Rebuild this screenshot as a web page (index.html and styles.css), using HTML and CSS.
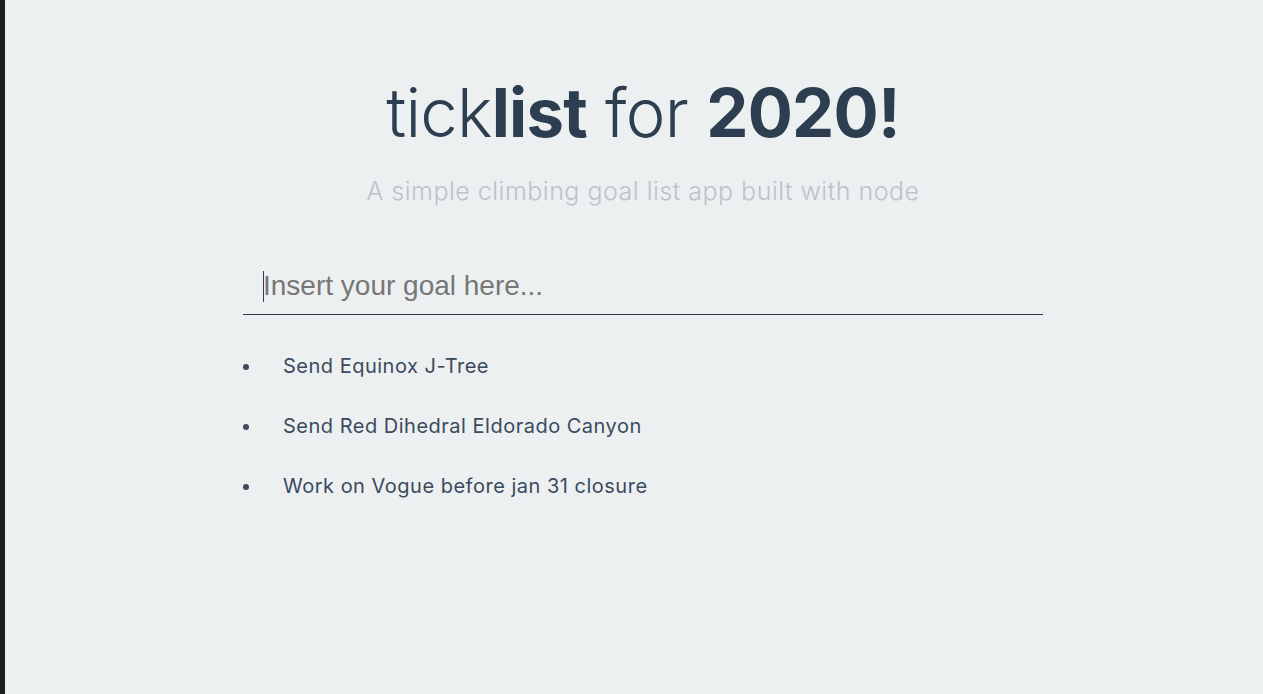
FILE: index.html
```html
<!DOCTYPE html>
<html lang="en">
<head>
<meta charset="utf-8">
<title>ticklist</title>
<link rel="stylesheet" href="styles.css">
</head>
<body>
<div class="page">
  <div class="edge"></div>
  <main class="main">
    <div class="container">
      <h1 class="title">tick<b>list</b> for <b>2020!</b></h1>
      <p class="subtitle">A simple climbing goal list app built with node</p>
      <form class="goal-form">
        <input class="goal-input" type="text" placeholder="Insert your goal here..." autofocus>
        <span class="caret"></span>
      </form>
      <ul class="goals">
        <li>Send Equinox J-Tree</li>
        <li>Send Red Dihedral Eldorado Canyon</li>
        <li>Work on Vogue before jan 31 closure</li>
      </ul>
    </div>
  </main>
</div>
</body>
</html>
```
FILE: styles.css
```css
* { box-sizing: border-box; }
html, body { margin: 0; height: 100%; }
body {
  background: #ecf0f1;
  font-family: Inter, "Noto Sans", sans-serif;
  color: #2c3e50;
}
.page { display: flex; min-height: 100%; }
.edge { width: 5px; background: #1e1e1e; flex: none; }
.main { flex: 1; padding-left: 18px; }
.container { width: 800px; margin: 0 auto; }
.title {
  margin: 73px 0 0;
  text-align: center;
  font-size: 67px;
  font-weight: 300;
  line-height: 80px;
  letter-spacing: -0.75px;
}
.title b { font-weight: 700; }
.subtitle {
  margin: 22px 0 0;
  text-align: center;
  font-size: 25px;
  font-weight: 300;
  color: #bcc3ca;
  line-height: 32px;
  letter-spacing: 0.5px;
}
.goal-form { margin-top: 51px; position: relative; }
.goal-input {
  display: block;
  width: 100%;
  height: 57px;
  border: none;
  border-bottom: 1px solid #2c3e50;
  background: transparent;
  padding: 0 20px;
  font-family: "Liberation Sans", Arial, sans-serif;
  font-size: 28px;
  color: #2c3e50;
  outline: none;
  caret-color: transparent;
}
.goal-input::placeholder { color: #777; }
.caret {
  position: absolute;
  left: 20px;
  top: 13px;
  width: 1px;
  height: 31px;
  background: #2c3e50;
}
.goals {
  margin: 39px 0 0;
  padding: 0;
  list-style: none;
}
.goals li {
  display: flex;
  align-items: center;
  font-size: 20px;
  line-height: 24px;
  margin-bottom: 36px;
  color: #3b4a5e;
  letter-spacing: 0.5px;
}
.goals li::before {
  content: "";
  width: 6px;
  height: 6px;
  border-radius: 50%;
  background: #3b4a5e;
  margin: 2px 34px 0 0;
  flex: none;
}
```
